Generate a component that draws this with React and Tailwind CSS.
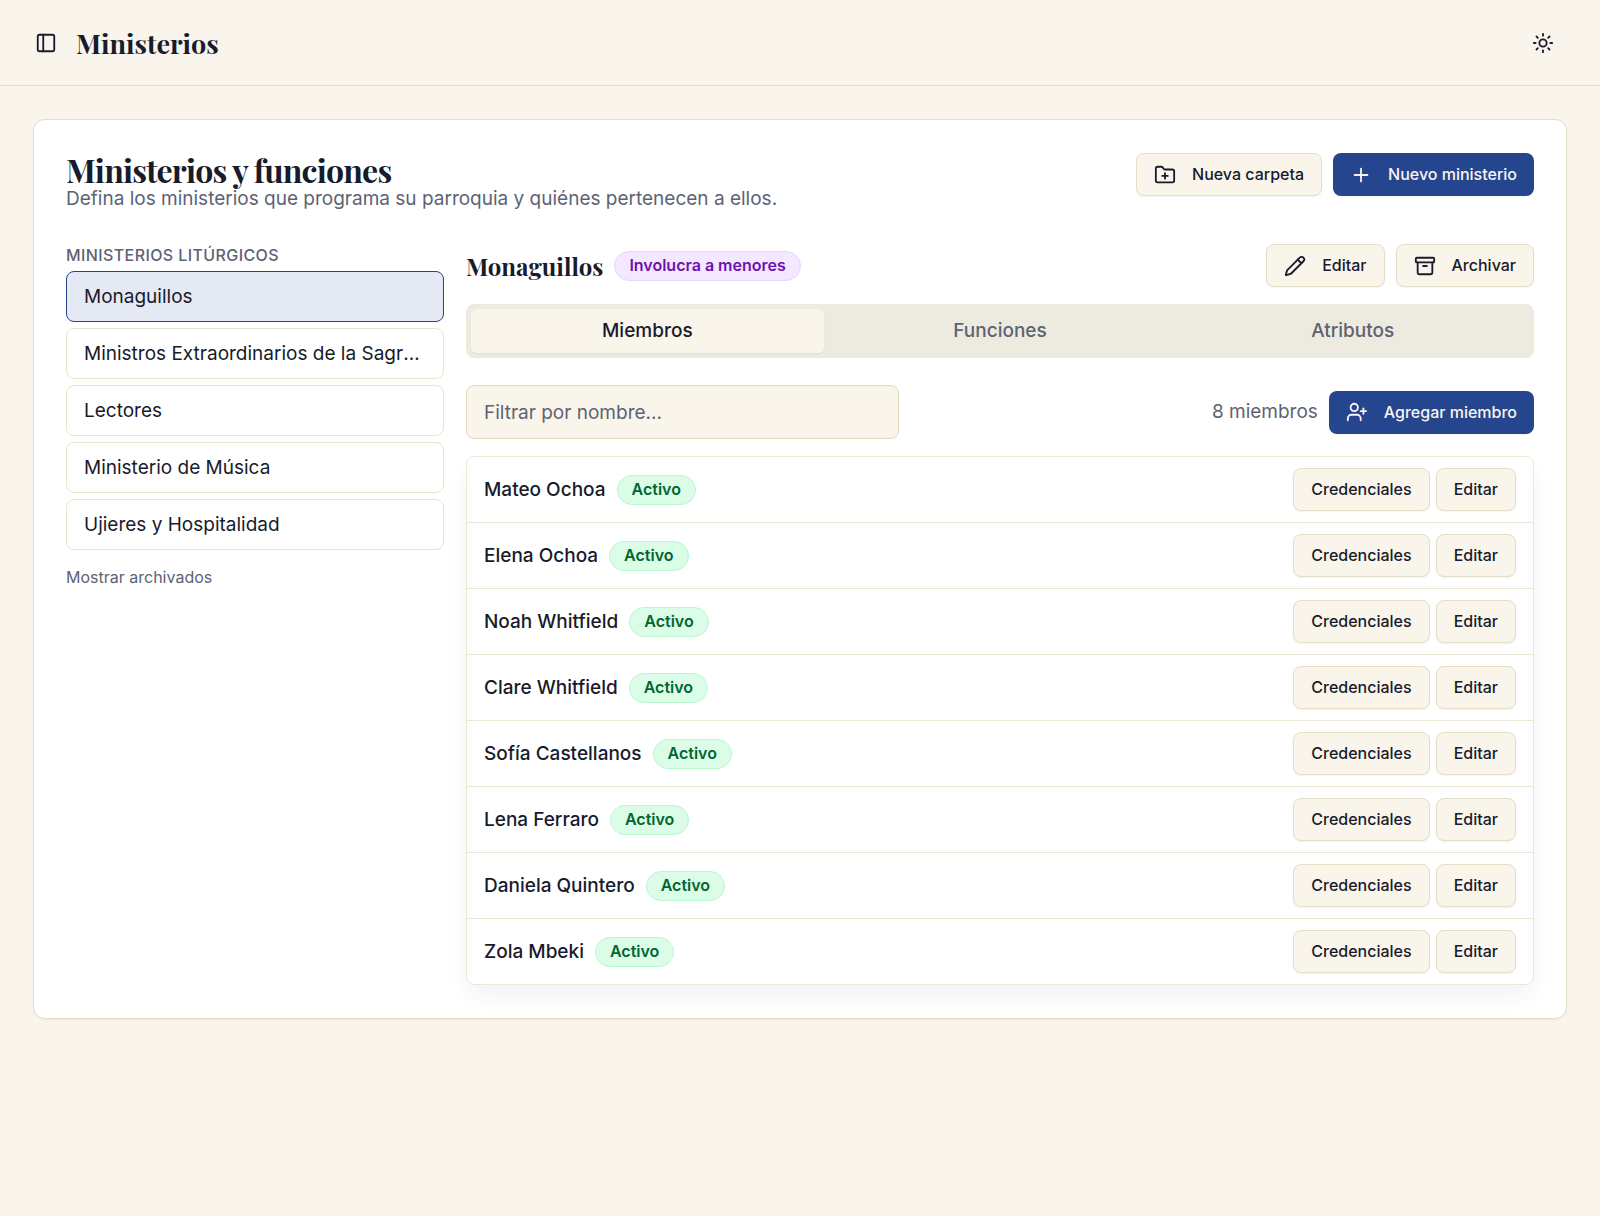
import { useState } from "react";
import { Archive, FolderPlus, PanelLeft, Pencil, Plus, Sun, UserPlus } from "lucide-react";

const ministries = [
  "Monaguillos",
  "Ministros Extraordinarios de la Sagrada Comunión",
  "Lectores",
  "Ministerio de Música",
  "Ujieres y Hospitalidad",
];

const members = [
  "Mateo Ochoa",
  "Elena Ochoa",
  "Noah Whitfield",
  "Clare Whitfield",
  "Sofía Castellanos",
  "Lena Ferraro",
  "Daniela Quintero",
  "Zola Mbeki",
];

const tabs = ["Miembros", "Funciones", "Atributos"];

const serif = "font-['Playfair_Display','Liberation_Serif',serif] font-bold";

function Button({ icon: Icon, primary, children }) {
  const look = primary
    ? "bg-[#26458f] text-[#f9f5ec] hover:bg-[#1f3a7a]"
    : "border bg-[#faf5eb] border-[#e4dec4] hover:bg-[#f3edda]";
  return (
    <button
      type="button"
      className={`inline-flex h-[43px] shrink-0 items-center gap-4 whitespace-nowrap rounded-lg px-[17px] text-base leading-[23px] font-medium shadow-xs ${look}`}
    >
      {Icon && <Icon size={22} />}
      {children}
    </button>
  );
}

function Badge({ tone, children }) {
  const colors =
    tone === "purple"
      ? "bg-purple-100 border-purple-200 text-purple-800"
      : "bg-green-100 border-green-200 text-green-800";
  return (
    <span className={`inline-flex h-[30px] items-center rounded-full border px-3.5 text-base leading-[23px] font-semibold ${colors}`}>
      {children}
    </span>
  );
}

export default function App() {
  const [ministry, setMinistry] = useState(ministries[0]);
  const [tab, setTab] = useState(tabs[0]);
  const [filter, setFilter] = useState("");

  const visible = members.filter((name) => name.toLowerCase().includes(filter.toLowerCase()));

  return (
    <div className="min-h-screen bg-[#f9f5ec] font-['Inter',sans-serif] text-[19px] leading-7 text-[#181b2b]">
      <header className="flex items-center justify-between border-b border-[#e4dec4] py-[21px] pl-[27px] pr-9">
        <div className="flex items-center gap-[11px]">
          <button type="button" aria-label="Alternar barra lateral" className="flex size-[38px] items-center justify-center rounded-lg">
            <PanelLeft size={22} />
          </button>
          <h1 className={`${serif} text-[27px] leading-9`}>Ministerios</h1>
        </div>
        <button type="button" aria-label="Cambiar tema" className="flex size-[43px] items-center justify-center rounded-lg">
          <Sun size={22} />
        </button>
      </header>

      <main className="p-[33px]">
        <section className="rounded-xl border border-[#e4dec4] bg-white px-8 py-[33px] shadow-xs">
          <div className="flex items-start justify-between gap-6">
            <div>
              <h2 className={`${serif} text-[32px] leading-[33px] tracking-tight`}>Ministerios y funciones</h2>
              <p className="leading-[26px] text-[#5d6274]">
                Defina los ministerios que programa su parroquia y quiénes pertenecen a ellos.
              </p>
            </div>
            <div className="flex gap-[11px]">
              <Button icon={FolderPlus}>Nueva carpeta</Button>
              <Button icon={Plus} primary>Nuevo ministerio</Button>
            </div>
          </div>

          <div className="mt-8 flex items-start gap-[22px]">
            <nav className="w-[378px] shrink-0">
              <h3 className="mb-1 text-base leading-[23px] font-medium uppercase tracking-wide text-[#5d6274]">Ministerios litúrgicos</h3>
              <ul className="space-y-1.5">
                {ministries.map((name) => (
                  <li key={name}>
                    <button
                      type="button"
                      onClick={() => setMinistry(name)}
                      className={`block h-[51px] w-full truncate rounded-lg border px-[17px] text-left ${
                        name === ministry ? "border-[#26458f] bg-[#e5e9f4]" : "border-[#e9e4ce] bg-white"
                      }`}
                    >
                      {name}
                    </button>
                  </li>
                ))}
              </ul>
              <button type="button" className="mt-4 block text-base leading-[23px] text-[#5d6274]">
                Mostrar archivados
              </button>
            </nav>

            <div className="min-w-0 flex-1">
              <div className="flex items-center justify-between">
                <div className="flex items-center gap-[11px]">
                  <h3 className={`${serif} text-2xl`}>{ministry}</h3>
                  <Badge tone="purple">Involucra a menores</Badge>
                </div>
                <div className="flex gap-[11px]">
                  <Button icon={Pencil}>Editar</Button>
                  <Button icon={Archive}>Archivar</Button>
                </div>
              </div>

              <div role="tablist" className="mt-[17px] grid h-[54px] grid-cols-3 rounded-lg bg-[#edebdf] p-[5px]">
                {tabs.map((name) => (
                  <button
                    key={name}
                    type="button"
                    role="tab"
                    aria-selected={name === tab}
                    onClick={() => setTab(name)}
                    className={`rounded-md font-medium ${name === tab ? "bg-[#faf5eb] shadow-xs" : "text-[#5d6274]"}`}
                  >
                    {name}
                  </button>
                ))}
              </div>

              <div className="mt-[27px] flex items-center justify-between">
                <input
                  type="text"
                  aria-label="Filtrar por nombre"
                  placeholder="Filtrar por nombre..."
                  value={filter}
                  onChange={(e) => setFilter(e.target.value)}
                  className="h-[54px] w-[433px] rounded-lg border border-[#e0d9bd] bg-[#faf5eb] px-[17px] placeholder:text-[#5d6274]"
                />
                <div className="flex items-center gap-[11px]">
                  <span className="text-[#5d6274]">{visible.length} miembros</span>
                  <Button icon={UserPlus} primary>Agregar miembro</Button>
                </div>
              </div>

              <ul className="mt-[17px] divide-y divide-[#ece8d6] rounded-lg border border-[#ece8d6] bg-white shadow-[0_12px_24px_-4px_rgba(30,40,90,0.07)]">
                {visible.map((name) => (
                  <li key={name} className="flex items-center justify-between px-[17px] py-[11px]">
                    <div className="flex items-center gap-[11px]">
                      <span className="font-medium">{name}</span>
                      <Badge>Activo</Badge>
                    </div>
                    <div className="flex gap-1.5">
                      <Button>Credenciales</Button>
                      <Button>Editar</Button>
                    </div>
                  </li>
                ))}
              </ul>
            </div>
          </div>
        </section>
      </main>
    </div>
  );
}
